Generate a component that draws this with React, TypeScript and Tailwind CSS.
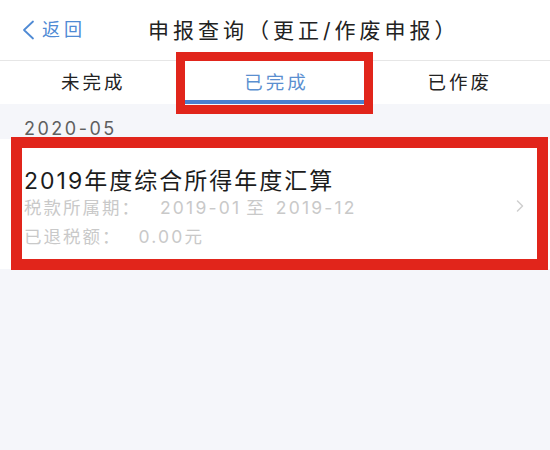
import React from "react";

const FONT = "font-['Inter','Noto_Sans_CJK_SC',sans-serif]";

export default function App() {
  return (
    <div className={`w-[550px] h-[450px] overflow-hidden bg-[#f5f6fa] ${FONT}`}>
      {/* Header */}
      <header className="h-[61px] bg-white flex items-center border-b border-[#e6e6e6]">
        <div className="w-[148px] flex items-center pl-[22px] text-[#4f8ad4]">
          <svg width="13" height="20" viewBox="0 0 13 20" fill="none">
            <path d="M11 1.5 L2 10 L11 18.5" stroke="#4f8ad4" strokeWidth="1.8" strokeLinecap="round" strokeLinejoin="round" />
          </svg>
          <span className="ml-[7px] text-[18px] tracking-[4px] leading-none">返回</span>
        </div>
        <h1 className="text-[21px] tracking-[4px] text-[#222] leading-none">申报查询（更正/作废申报）</h1>
      </header>

      {/* Tabs */}
      <nav className="grid grid-cols-3 h-[43px] bg-white text-[18.5px] tracking-[3px]">
        <div className="flex items-center justify-center pl-[3px] text-[#222]">未完成</div>
        <div className="relative flex items-center justify-center pl-[3px] text-[#5b8fd0]">
          已完成
          <div className="absolute bottom-0 left-[2px] right-0 h-[4px] bg-[#4a7fd0]" />
          <div className="absolute -left-[7px] -right-[6px] -top-[9px] -bottom-[10px] border-[9px] border-[#e1251b]" />
        </div>
        <div className="flex items-center justify-center pl-[3px] text-[#222]">已作废</div>
      </nav>

      {/* Section */}
      <div className="h-[35px] pt-[14px] pl-[24px] text-[18px] tracking-[2.5px] leading-[22px] text-[#5f5f5f]">
        2020-05
      </div>

      {/* Card */}
      <div className="relative h-[130px] bg-white flex">
        <div className="flex-1 pl-[24px] pt-[28px]">
          <div className="text-[23px] tracking-[2px] leading-[28px] text-[#1c1c1c]">2019年度综合所得年度汇算</div>
          <div className="flex text-[17.5px] leading-[26px] text-[#c9c9c9]">
            <span className="tracking-[2px]">税款所属期：</span>
            <span className="ml-[19px] tracking-[2.2px]">2019-01</span>
            <span className="ml-[5px] tracking-[2px]">至</span>
            <span className="ml-[10px] tracking-[2.2px]">2019-12</span>
          </div>
          <div className="flex mt-[3px] text-[17.5px] leading-[26px] text-[#c9c9c9]">
            <span className="tracking-[2px]">已退税额：</span>
            <span className="ml-[17px] tracking-[2.2px]">0.00元</span>
          </div>
        </div>
        <div className="flex items-center pr-[26px] pt-[4px]">
          <svg width="8" height="12" viewBox="0 0 8 12" fill="none">
            <path d="M1.5 1 L6.5 6 L1.5 11" stroke="#cfcfcf" strokeWidth="1.5" strokeLinecap="round" strokeLinejoin="round" />
          </svg>
        </div>
        <div className="absolute left-[11px] right-[2px] -top-[2px] -bottom-[1px] border-[11px] border-[#e1251b]" />
      </div>
    </div>
  );
}
